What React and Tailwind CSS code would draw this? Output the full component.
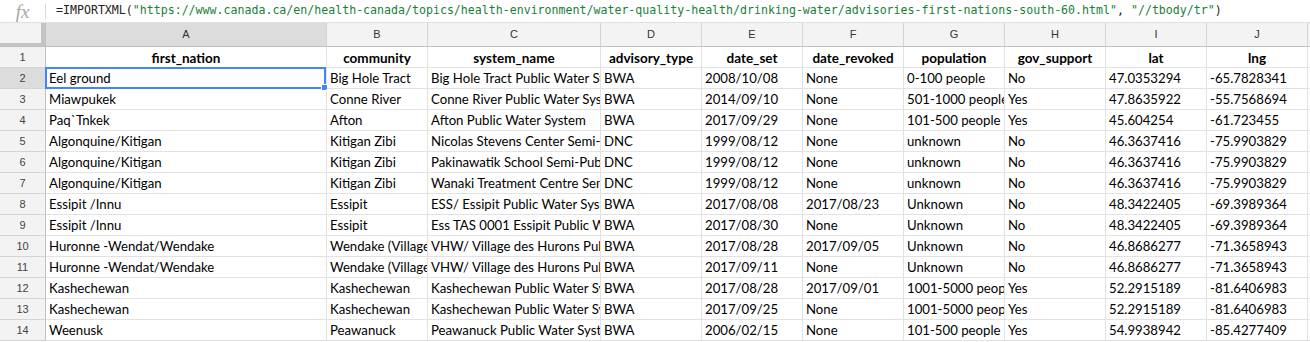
import React from 'react';

const headers = ['first_nation', 'community', 'system_name', 'advisory_type', 'date_set', 'date_revoked', 'population', 'gov_support', 'lat', 'lng'];
const letters = ['A', 'B', 'C', 'D', 'E', 'F', 'G', 'H', 'I', 'J'];

const rows = [
  ['Eel ground', 'Big Hole Tract', 'Big Hole Tract Public Water System', 'BWA', '2008/10/08', 'None', '0-100 people', 'No', '47.0353294', '-65.7828341'],
  ['Miawpukek', 'Conne River', 'Conne River Public Water System', 'BWA', '2014/09/10', 'None', '501-1000 people', 'Yes', '47.8635922', '-55.7568694'],
  ['Paq`Tnkek', 'Afton', 'Afton Public Water System', 'BWA', '2017/09/29', 'None', '101-500 people', 'Yes', '45.604254', '-61.723455'],
  ['Algonquine/Kitigan', 'Kitigan Zibi', 'Nicolas Stevens Center Semi-Public Water System', 'DNC', '1999/08/12', 'None', 'unknown', 'No', '46.3637416', '-75.9903829'],
  ['Algonquine/Kitigan', 'Kitigan Zibi', 'Pakinawatik School Semi-Public Water System', 'DNC', '1999/08/12', 'None', 'unknown', 'No', '46.3637416', '-75.9903829'],
  ['Algonquine/Kitigan', 'Kitigan Zibi', 'Wanaki Treatment Centre Semi-Public Water System', 'DNC', '1999/08/12', 'None', 'unknown', 'No', '46.3637416', '-75.9903829'],
  ['Essipit /Innu', 'Essipit', 'ESS/ Essipit Public Water System', 'BWA', '2017/08/08', '2017/08/23', 'Unknown', 'No', '48.3422405', '-69.3989364'],
  ['Essipit /Innu', 'Essipit', 'Ess TAS 0001 Essipit Public Water System', 'BWA', '2017/08/30', 'None', 'Unknown', 'No', '48.3422405', '-69.3989364'],
  ['Huronne -Wendat/Wendake', 'Wendake (Village des Hurons)', 'VHW/ Village des Hurons Public Water System', 'BWA', '2017/08/28', '2017/09/05', 'Unknown', 'No', '46.8686277', '-71.3658943'],
  ['Huronne -Wendat/Wendake', 'Wendake (Village des Hurons)', 'VHW/ Village des Hurons Public Water System', 'BWA', '2017/09/11', 'None', 'Unknown', 'No', '46.8686277', '-71.3658943'],
  ['Kashechewan', 'Kashechewan', 'Kashechewan Public Water System', 'BWA', '2017/08/28', '2017/09/01', '1001-5000 people', 'Yes', '52.2915189', '-81.6406983'],
  ['Kashechewan', 'Kashechewan', 'Kashechewan Public Water System', 'BWA', '2017/09/25', 'None', '1001-5000 people', 'Yes', '52.2915189', '-81.6406983'],
  ['Weenusk', 'Peawanuck', 'Peawanuck Public Water System', 'BWA', '2006/02/15', 'None', '101-500 people', 'Yes', '54.9938942', '-85.4277409'],
];

const url = '"https://www.canada.ca/en/health-canada/topics/health-environment/water-quality-health/drinking-water/advisories-first-nations-south-60.html"';

const FormulaBar = () => (
  <div className="flex h-[23px] items-center border-b border-[#e0e0e0] bg-white">
    <div className="flex h-full w-[45px] items-center justify-center">
      <span className="text-[19px] italic leading-none text-[#a8a8a8]" style={{ fontFamily: '"Liberation Serif", serif' }}>
        fx
      </span>
    </div>
    <div className="h-[15px] w-px bg-[#dadada]" />
    <div className="ml-[10px] whitespace-nowrap text-[11.6px] text-[#222]" style={{ fontFamily: '"DejaVu Sans Mono", monospace' }}>
      =IMPORTXML(<span className="text-[#188038]">{url}</span>, <span className="text-[#188038]">"//tbody/tr"</span>)
    </div>
  </div>
);

const App = () => {
  return (
    <div className="h-[342px] w-[1310px] overflow-hidden bg-white" style={{ fontFamily: 'Lato, "Open Sans", sans-serif' }}>
      <FormulaBar />
      <div className="grid grid-cols-[46px_281px_101px_173px_101px_101px_101px_101px_101px_101px_101px_2px] auto-rows-[21px] grid-rows-[24px]">
        {/* column header row */}
        <div className="relative border-b border-r border-[#c0c0c0] bg-[#f3f3f3]">
          <div className="absolute right-0 top-0 h-full w-[4px] bg-[#c4c4c4]" />
          <div className="absolute bottom-0 left-0 h-[3px] w-full bg-[#c4c4c4]" />
        </div>
        {letters.map((l, i) => (
          <div
            key={l}
            className={`flex items-center justify-center border-b border-r border-b-[#c0c0c0] border-r-[#d4d4d4] text-[11px] text-[#333] ${i === 0 ? 'bg-[#dcdcdc]' : 'bg-[#f3f3f3]'}`}
            style={{ fontFamily: '"Liberation Sans", Arial, sans-serif' }}
          >
            {l}
          </div>
        ))}
        <div className="border-b border-[#c0c0c0] bg-[#f3f3f3]" />

        {/* row 1: headers */}
        <div className="flex items-center justify-center border-b border-r border-b-[#d4d4d4] border-r-[#c0c0c0] bg-[#f3f3f3] text-[11px] text-[#444]" style={{ fontFamily: '"Liberation Sans", Arial, sans-serif' }}>
          1
        </div>
        {headers.map((h) => (
          <div key={h} className="flex items-center justify-center overflow-hidden whitespace-nowrap border-b border-r border-[#e2e2e2] pt-[2px] text-[13.5px] font-bold text-black">
            {h}
          </div>
        ))}
        <div className="border-b border-[#e2e2e2]" />

        {rows.map((r, ri) => (
          <React.Fragment key={ri}>
            <div
              className={`flex items-center justify-center border-b border-r border-b-[#d4d4d4] border-r-[#c0c0c0] text-[11px] text-[#444] ${ri === 0 ? 'bg-[#dcdcdc]' : 'bg-[#f3f3f3]'}`}
              style={{ fontFamily: '"Liberation Sans", Arial, sans-serif' }}
            >
              {ri + 2}
            </div>
            {r.map((c, ci) => (
              <div key={ci} className="relative flex items-center overflow-visible border-b border-r border-[#e2e2e2] pt-[2px]">
                <div className="w-full overflow-hidden whitespace-nowrap pl-[3px] text-[13.2px] text-black">{c}</div>
                {ri === 0 && ci === 0 && (
                  <div className="pointer-events-none absolute -left-px -top-px bottom-[-1px] right-0 border-2 border-[#4285f4]">
                    <div className="absolute -bottom-[4px] -right-[4px] h-[7px] w-[7px] border border-white bg-[#4285f4]" />
                  </div>
                )}
              </div>
            ))}
            <div className="border-b border-[#e2e2e2]" />
          </React.Fragment>
        ))}
      </div>
    </div>
  );
};

export default App;
